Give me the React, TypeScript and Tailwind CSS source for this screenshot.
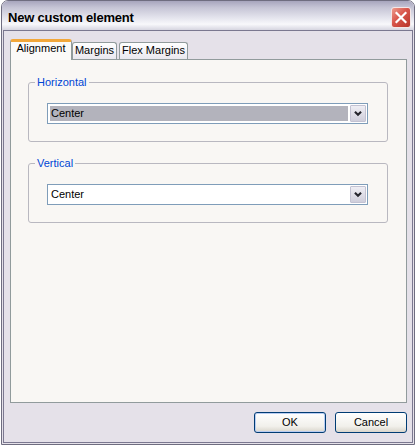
import React from "react";

function Chevron() {
  return (
    <svg width="16" height="17" viewBox="0 0 16 17">
      <path d="M4.5 6.5 L8 10 L11.5 6.5" fill="none" stroke="#26262e" strokeWidth="2.4" />
    </svg>
  );
}

function Select({ selected }: { selected?: boolean }) {
  return (
    <div className="ml-[18px] mr-[19px] h-[21px] border border-[#7f9db9] bg-white flex p-[1px]">
      <div className="flex-1 flex">
        <div
          className={
            selected
              ? "flex-1 m-[1px] mr-[2px] bg-[#b3b3bc] flex items-center pl-[1px]"
              : "flex-1 m-[1px] mr-[2px] flex items-center pl-[1px]"
          }
        >
          Center
        </div>
      </div>
      <div className="w-[16px] h-full border border-[#c3c2d2] rounded-[1px] bg-[linear-gradient(to_bottom,#efeef4,#cfcedb)] flex items-center justify-center">
        <Chevron />
      </div>
    </div>
  );
}

function Group({ label, mt, selected }: { label: string; mt: string; selected?: boolean }) {
  return (
    <fieldset className={`${mt} border border-[#b9b8c0] rounded-[3px] pb-[17px]`}>
      <legend className="ml-[6px] px-[2px] leading-[13px] text-[#0046d5]">{label}</legend>
      <div className="mt-[14px]">
        <Select selected={selected} />
      </div>
    </fieldset>
  );
}

export default function App() {
  return (
    <div className="w-[418px] h-[447px] bg-white font-['Liberation_Sans',Arial,sans-serif] text-[11px] text-black">
      <div className="ml-[1px] w-[414px] h-[445px] flex flex-col rounded-t-[7px] border border-[#6f6d80] overflow-hidden">
        <div className="h-[29px] shrink-0 flex justify-between items-start pl-[6px] pr-[3px] bg-[linear-gradient(to_bottom,#a7a5bd_0%,#c5c4d5_22%,#e8e8f0_62%,#f8f8fb_80%,#d6d5e0_100%)]">
          <span className="mt-[9px] text-[13px] leading-[16px] font-bold tracking-[-0.2px]">
            New custom element
          </span>
          <div className="mt-[6px] w-[20px] h-[21px] rounded-[3px] border border-[#f4e6e6] bg-[linear-gradient(135deg,#ee9c8e_0%,#d8554a_45%,#b7352a_100%)] flex items-center justify-center">
            <svg width="18" height="19" viewBox="0 0 18 19">
              <path d="M4.5 5 L13.5 14 M13.5 5 L4.5 14" stroke="#ffffff" strokeWidth="2.2" strokeLinecap="square" />
            </svg>
          </div>
        </div>
        <div className="flex-1 bg-[#e5e1e9] px-[1px] pb-[1px] flex flex-col">
          <div className="flex-1 border border-[#7b7890] flex flex-col pl-[6px] pr-[5px] pt-[8px]">
            <div className="h-[20px] flex items-end relative z-10 shrink-0">
              <div className="w-[62px] h-[21px] -mb-[1px] bg-[#fbfaf8] border-x border-[#919b9c] border-t-[3px] border-t-[#f2a73a] rounded-t-[3px] text-center leading-[13px]">
                Alignment
              </div>
              <div className="w-[45px] h-[17px] border-t border-x border-[#919b9c] rounded-t-[3px] bg-[linear-gradient(to_bottom,#ffffff,#e9e8ef)] text-center leading-[13px] pt-[1px]">
                Margins
              </div>
              <div className="ml-[2px] w-[69px] h-[17px] border-t border-x border-[#919b9c] rounded-t-[3px] bg-[linear-gradient(to_bottom,#ffffff,#e9e8ef)] text-center leading-[13px] pt-[1px]">
                Flex Margins
              </div>
            </div>
            <div className="flex-1 border border-[#919b9c] bg-[#f9f7f4] flex flex-col pl-[17px] pr-[18px]">
              <Group label="Horizontal" mt="mt-[16px]" selected />
              <Group label="Vertical" mt="mt-[15px]" />
            </div>
            <div className="h-[21px] mt-[9px] mb-[9px] flex justify-end gap-[9px] shrink-0">
              <button className="w-[72px] h-[21px] rounded-[3px] border border-[#003c74] bg-[linear-gradient(to_bottom,#ffffff,#f1f0eb_70%,#d9d5cb)] shadow-[inset_0_0_0_1px_#b9cdf2] leading-[13px]">
                OK
              </button>
              <button className="w-[72px] h-[21px] rounded-[3px] border border-[#003c74] bg-[linear-gradient(to_bottom,#ffffff,#f1f0eb_70%,#d9d5cb)] leading-[13px]">
                Cancel
              </button>
            </div>
          </div>
        </div>
      </div>
    </div>
  );
}
